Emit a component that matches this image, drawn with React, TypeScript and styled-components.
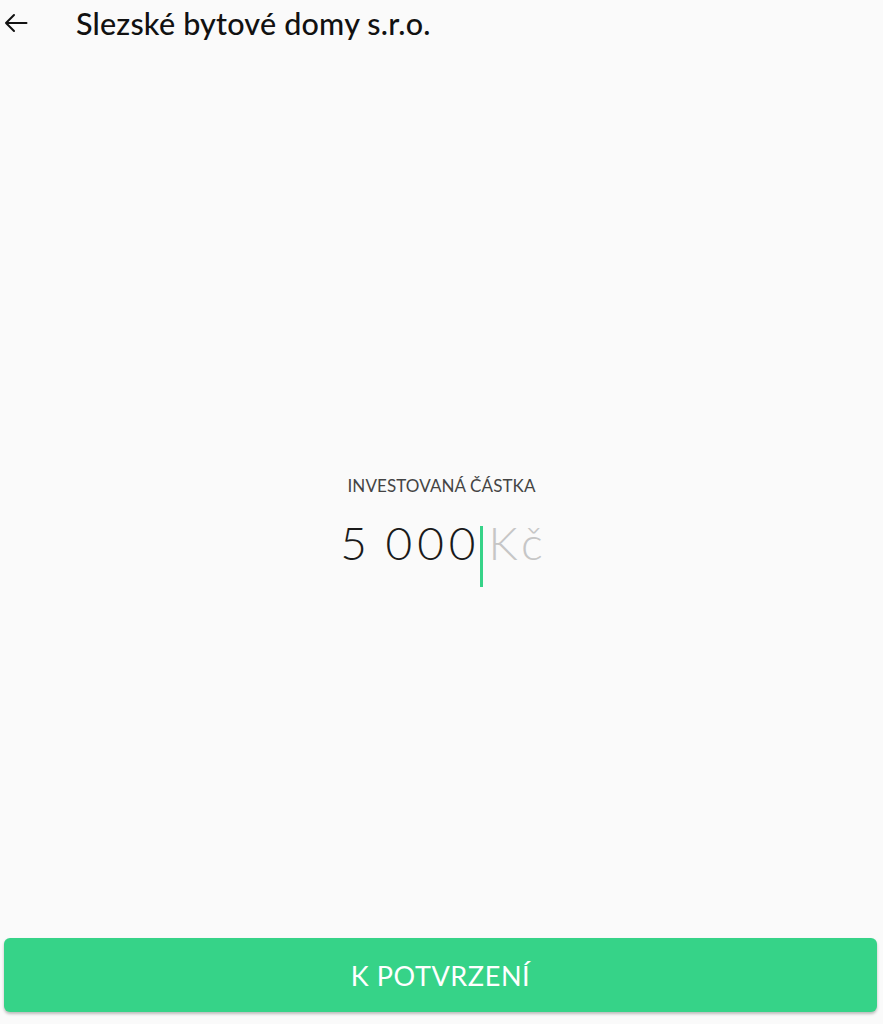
import styled, { createGlobalStyle } from "styled-components"

const GlobalStyle = createGlobalStyle`
  html, body {
    margin: 0;
    padding: 0;
    background: #fafafa;
  }
  body {
    font-family: Lato, "Noto Sans", sans-serif;
  }
`

const App = () => {
  return (
    <Page>
      <GlobalStyle />
      <Header>
        <BackButton aria-label="Zpět">
          <svg width="24" height="24" viewBox="0 0 24 24" fill="none">
            <path d="M22.5 12H2M10 4l-8 8 8 8" stroke="#111" strokeWidth="2" strokeLinecap="round" strokeLinejoin="round" />
          </svg>
        </BackButton>
        <Title>Slezské bytové domy s.r.o.</Title>
      </Header>

      <Content>
        <Label>INVESTOVANÁ ČÁSTKA</Label>
        <AmountRow>
          <Amount>5 000</Amount>
          <Caret />
          <Currency>Kč</Currency>
        </AmountRow>
      </Content>

      <Footer>
        <ConfirmButton>K POTVRZENÍ</ConfirmButton>
      </Footer>
    </Page>
  )
}

export default App

/* STYLED COMPONENTS */
const Page = styled.div`
  display: flex;
  flex-direction: column;
  height: 100vh;
  background: #fafafa;
`

const Header = styled.div`
  display: flex;
  align-items: center;
  height: 46px;
  padding: 0 4px;
`

const BackButton = styled.button`
  display: flex;
  align-items: center;
  justify-content: center;
  width: 24px;
  height: 24px;
  padding: 0;
  border: none;
  background: none;
  cursor: pointer;
`

const Title = styled.h1`
  margin: 0 0 0 48px;
  font-size: 30.5px;
  font-weight: 500;
  color: #111;
  letter-spacing: 0.2px;
`

const Content = styled.div`
  flex: 1;
  display: flex;
  flex-direction: column;
  align-items: center;
  justify-content: center;
  padding-top: 78px;
`

const Label = styled.div`
  font-size: 17px;
  color: #444;
  letter-spacing: 0.1px;
`

const AmountRow = styled.div`
  display: flex;
  align-items: flex-start;
  margin-top: 20px;
`

const Amount = styled.span`
  font-size: 46px;
  font-weight: 300;
  color: #1a1a1a;
  line-height: 54px;
  letter-spacing: 5px;
  word-spacing: -4px;
  margin-right: -5px;
`

const Caret = styled.span`
  width: 3px;
  height: 61px;
  margin: 10px 6px 0 4px;
  background: #36d388;
`

const Currency = styled.span`
  font-size: 46px;
  font-weight: 300;
  color: #c6c6c6;
  line-height: 54px;
  letter-spacing: 5px;
  margin-right: -5px;
`

const Footer = styled.div`
  padding: 0 6px 12px 4px;
`

const ConfirmButton = styled.button`
  width: 100%;
  height: 74px;
  border: none;
  border-radius: 6px;
  background: #36d388;
  color: #fff;
  font-family: Lato, "Noto Sans", sans-serif;
  font-size: 27px;
  font-weight: 400;
  letter-spacing: 0.6px;
  box-shadow: 0 2px 3px rgba(0, 0, 0, 0.25);
  cursor: pointer;
`
